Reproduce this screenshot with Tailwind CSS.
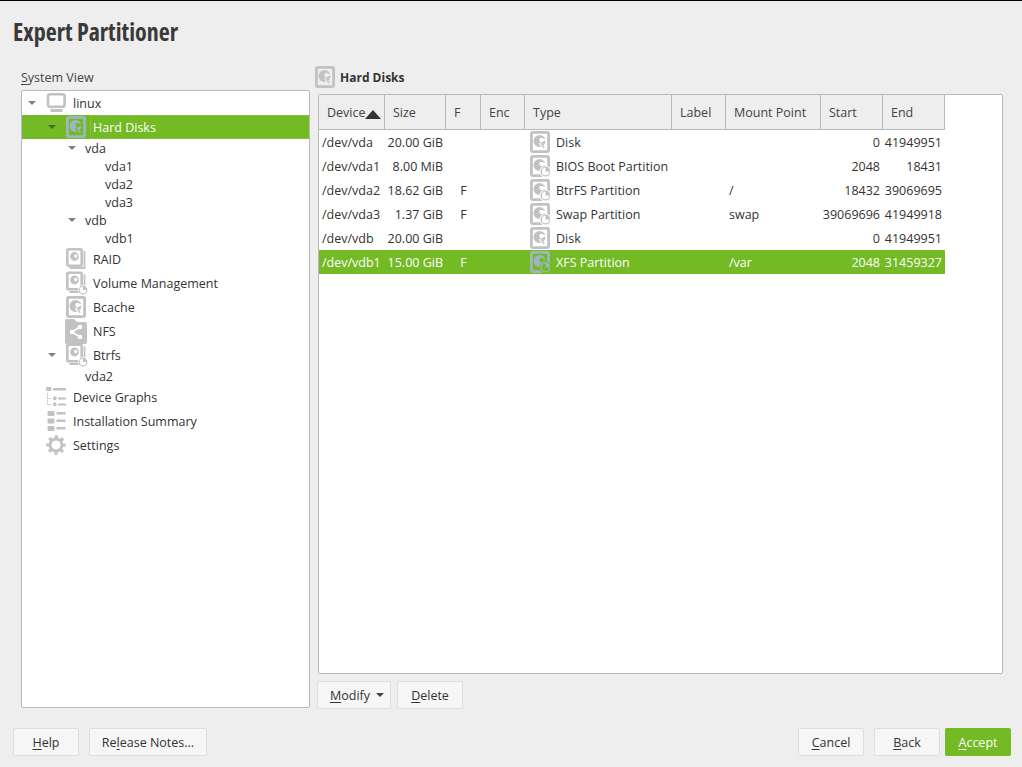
<!DOCTYPE html>
<html lang="en">
<head>
<meta charset="UTF-8">
<title>Expert Partitioner</title>
<script src="https://cdn.jsdelivr.net/npm/@tailwindcss/browser@4"></script>
</head>
<body class="bg-[#eeeeee] text-[#333333] text-[12.5px] leading-[15px] [font-family:'Open_Sans',sans-serif] overflow-hidden">

<!-- icon sprites -->
<svg class="hidden" xmlns="http://www.w3.org/2000/svg">
  <symbol id="i-monitor" viewBox="0 0 20 22">
    <rect x="2" y="2.200" width="16.600" height="12.600" rx="2" fill="none" stroke="currentColor" stroke-width="2.600"/>
    <rect x="4.500" y="17" width="12" height="3" fill="currentColor"/>
  </symbol>
  <symbol id="i-disk" viewBox="0 0 20 22">
    <rect x="1.400" y="1.400" width="17.200" height="19.200" rx="1.500" fill="none" stroke="currentColor" stroke-width="2.800"/>
    <circle cx="9.500" cy="10" r="6" fill="currentColor"/>
    <circle cx="11.600" cy="9" r="2.300" fill="var(--ibg,#fff)"/>
    <path d="M12 9l5 0" stroke="var(--ibg,#fff)" stroke-width="1.800"/>
    <path d="M10 12l4.500 6" stroke="var(--ibg,#fff)" stroke-width="2.800"/>
    <path d="M11 12.500l3.200 4.400" stroke="currentColor" stroke-width="1.300"/>
  </symbol>
  <symbol id="i-part" viewBox="0 0 20 22">
    <rect x="1.400" y="1.400" width="17.200" height="19.200" rx="1.500" fill="none" stroke="currentColor" stroke-width="2.800"/>
    <circle cx="9.500" cy="10" r="6" fill="currentColor"/>
    <circle cx="11.600" cy="9" r="2.300" fill="var(--ibg,#fff)"/>
    <path d="M12 9l5 0" stroke="var(--ibg,#fff)" stroke-width="1.800"/>
    <circle cx="15.500" cy="16.500" r="6" fill="var(--ibg,#fff)"/>
    <circle cx="15.500" cy="16.500" r="4.400" fill="none" stroke="currentColor" stroke-width="1.300"/>
    <path d="M15.500 16.500v-4a4 4 0 0 1 4 4z" fill="currentColor"/>
  </symbol>
  <symbol id="i-raid" viewBox="0 0 20 22">
    <rect x="1.300" y="1.300" width="14.400" height="16.400" rx="1.500" fill="none" stroke="currentColor" stroke-width="2.600"/>
    <circle cx="8.500" cy="8.500" r="4.400" fill="currentColor"/>
    <circle cx="9.800" cy="8" r="1.700" fill="#fff"/>
    <path d="M18.500 3v17h-15" fill="none" stroke="currentColor" stroke-width="1.800"/>
  </symbol>
  <symbol id="i-lvm" viewBox="0 0 22 24">
    <rect x="1.300" y="1.800" width="14.400" height="16.400" rx="1.500" fill="none" stroke="currentColor" stroke-width="2.600"/>
    <circle cx="8.500" cy="9" r="4.400" fill="currentColor"/>
    <circle cx="9.800" cy="8.500" r="1.700" fill="#fff"/>
    <path d="M18.500 3.500v13M3.500 21h10" fill="none" stroke="currentColor" stroke-width="1.800"/>
    <circle cx="17" cy="19" r="5" fill="#fff"/>
    <circle cx="17" cy="19" r="3.800" fill="none" stroke="currentColor" stroke-width="1.200"/>
    <path d="M17 19v-3.400a3.400 3.400 0 0 1 3.400 3.400z" fill="currentColor"/>
  </symbol>
  <symbol id="i-nfs" viewBox="0 0 22 25">
    <path d="M0 2a2 2 0 0 1 2-2h7l3 3h8a2 2 0 0 1 2 2v18a2 2 0 0 1-2 2H2a2 2 0 0 1-2-2z" fill="currentColor"/>
    <path d="M15 8l-8 5 8 5" fill="none" stroke="#fff" stroke-width="1.500"/>
    <circle cx="15" cy="8" r="2.300" fill="#fff"/>
    <circle cx="7" cy="13" r="2.300" fill="#fff"/>
    <circle cx="15" cy="18" r="2.300" fill="#fff"/>
  </symbol>
  <symbol id="i-graph" viewBox="0 0 20 22">
    <rect x="0" y="1" width="5.500" height="4" rx="1" fill="currentColor"/>
    <rect x="7" y="2" width="13" height="2.500" fill="currentColor"/>
    <path d="M1.500 7v12M1.500 12.500h4M1.500 18.500h4" fill="none" stroke="currentColor" stroke-width="1" stroke-dasharray="1.500 .7"/>
    <rect x="7" y="10.500" width="3.500" height="3.500" rx="1" fill="currentColor"/>
    <rect x="12" y="11.500" width="8" height="2" fill="currentColor"/>
    <rect x="7" y="16.500" width="3.500" height="3.500" rx="1" fill="currentColor"/>
    <rect x="12" y="17.500" width="8" height="2" fill="currentColor"/>
  </symbol>
  <symbol id="i-list" viewBox="0 0 20 22">
    <rect x="1.500" y="1" width="7" height="5" rx="1" fill="currentColor"/>
    <rect x="10.500" y="2" width="9" height="2.500" fill="currentColor"/>
    <rect x="1.500" y="8.500" width="7" height="5" rx="1" fill="currentColor"/>
    <rect x="10.500" y="9.500" width="9" height="2.500" fill="currentColor"/>
    <rect x="1.500" y="16" width="7" height="5" rx="1" fill="currentColor"/>
    <rect x="10.500" y="17" width="9" height="2.500" fill="currentColor"/>
  </symbol>
  <symbol id="i-gear" viewBox="0 0 20 20">
    <circle cx="10" cy="10" r="6" fill="none" stroke="currentColor" stroke-width="2.800"/>
    <circle cx="10" cy="10" r="8.200" fill="none" stroke="currentColor" stroke-width="3" stroke-dasharray="3.200 3.240" stroke-dashoffset="1.600"/>
  </symbol>
</svg>

<div class="h-[767px] flex flex-col border-t border-black">

  <!-- title -->
  <header class="h-[65px] pl-[13px] pt-[18px]">
    <h1 class="text-[24px] leading-[26px] font-bold text-[#3a3a3a] [font-stretch:75%]">Expert Partitioner</h1>
  </header>

  <div class="flex-1 min-h-0 flex pl-[21px] pr-[19px]">

    <!-- system view tree -->
    <div class="w-[289px] flex flex-col">
      <div class="h-6 flex items-center pb-[2px] text-[#444]"><span><u class="underline-offset-2">S</u>ystem View</span></div>
      <div class="flex-1 mb-px bg-white border border-[#b9b9b9] rounded-[2px] overflow-hidden">

        <div class="h-6 flex items-center">
          <span class="w-[23px] pl-[6px]"><span class="block w-0 h-0 border-x-4 border-x-transparent border-t-4 border-t-[#808080]"></span></span>
          <svg class="w-5 h-[22px] ml-px shrink-0 text-[#c2c2c2]"><use href="#i-monitor"/></svg>
          <span class="ml-[7px]">linux</span>
        </div>

        <div class="h-6 flex items-center pl-5 bg-[#73ba25] text-white font-medium [--ibg:#73ba25]">
          <span class="w-[23px] pl-[6px]"><span class="block w-0 h-0 border-x-4 border-x-transparent border-t-4 border-t-[#4a6b26]"></span></span>
          <svg class="w-5 h-[22px] ml-px shrink-0 text-[#9db7c1]"><use href="#i-disk"/></svg>
          <span class="ml-[4px] self-stretch flex-1 flex items-center pl-[2px] border border-r-0 border-[#83c13c]">Hard Disks</span>
        </div>

        <div class="h-[18px] flex items-center pl-10">
          <span class="w-[23px] pl-[6px]"><span class="block w-0 h-0 border-x-4 border-x-transparent border-t-4 border-t-[#808080]"></span></span>
          <span>vda</span>
        </div>
        <div class="h-[18px] flex items-center pl-[83px]">vda1</div>
        <div class="h-[18px] flex items-center pl-[83px]">vda2</div>
        <div class="h-[18px] flex items-center pl-[83px]">vda3</div>
        <div class="h-[18px] flex items-center pl-10">
          <span class="w-[23px] pl-[6px]"><span class="block w-0 h-0 border-x-4 border-x-transparent border-t-4 border-t-[#808080]"></span></span>
          <span>vdb</span>
        </div>
        <div class="h-[18px] flex items-center pl-[83px]">vdb1</div>

        <div class="h-6 flex items-center pl-[44px]">
          <svg class="w-5 h-[22px] shrink-0 text-[#c2c2c2]"><use href="#i-raid"/></svg>
          <span class="ml-[7px]">RAID</span>
        </div>
        <div class="h-6 flex items-center pl-[44px]">
          <svg class="w-[22px] h-6 -mr-[2px] shrink-0 text-[#c2c2c2]"><use href="#i-lvm"/></svg>
          <span class="ml-[7px]">Volume Management</span>
        </div>
        <div class="h-6 flex items-center pl-[44px]">
          <svg class="w-5 h-[22px] shrink-0 text-[#c2c2c2]"><use href="#i-disk"/></svg>
          <span class="ml-[7px]">Bcache</span>
        </div>
        <div class="h-6 flex items-center pl-[43px]">
          <svg class="w-[22px] h-[25px] shrink-0 text-[#c2c2c2]"><use href="#i-nfs"/></svg>
          <span class="ml-[6px]">NFS</span>
        </div>
        <div class="h-6 flex items-center pl-5">
          <span class="w-[23px] pl-[6px]"><span class="block w-0 h-0 border-x-4 border-x-transparent border-t-4 border-t-[#808080]"></span></span>
          <svg class="w-[22px] h-6 ml-px -mr-[2px] shrink-0 text-[#c2c2c2]"><use href="#i-lvm"/></svg>
          <span class="ml-[7px]">Btrfs</span>
        </div>
        <div class="h-[18px] flex items-center pl-[63px]">vda2</div>

        <div class="h-6 flex items-center pl-[24px]">
          <svg class="w-5 h-[22px] shrink-0 text-[#c2c2c2]"><use href="#i-graph"/></svg>
          <span class="ml-[7px]">Device Graphs</span>
        </div>
        <div class="h-6 flex items-center pl-[24px]">
          <svg class="w-5 h-[22px] shrink-0 text-[#c2c2c2]"><use href="#i-list"/></svg>
          <span class="ml-[7px]">Installation Summary</span>
        </div>
        <div class="h-6 flex items-center pl-[24px]">
          <svg class="w-5 h-5 shrink-0 text-[#c2c2c2]"><use href="#i-gear"/></svg>
          <span class="ml-[7px]">Settings</span>
        </div>
      </div>
    </div>

    <!-- hard disks panel -->
    <div class="ml-[8px] flex-1 flex flex-col">
      <div class="h-7 flex items-center pb-[6px] -ml-[3px]">
        <svg class="w-5 h-[22px] shrink-0 text-[#c2c2c2] [--ibg:#eeeeee]"><use href="#i-disk"/></svg>
        <span class="ml-[5px] text-[12px] font-bold text-[#333]">Hard Disks</span>
      </div>
      <div class="flex-1 min-h-0 bg-white border border-[#b9b9b9] rounded-[2px] overflow-hidden">
        <table class="table-fixed w-[626px] border-separate border-spacing-0 whitespace-nowrap">
          <colgroup>
            <col class="w-[66px]"><col class="w-[61px]"><col class="w-[35px]"><col class="w-[44px]"><col class="w-[147px]"><col class="w-[54px]"><col class="w-[95px]"><col class="w-[62px]"><col class="w-[62px]">
          </colgroup>
          <thead>
            <tr class="h-[35px] bg-[#eeeeee] text-[#444] text-left">
              <th class="font-normal pl-2 border-r border-b border-[#b9b9b9] relative">Device<svg class="absolute left-[46px] top-[15px] w-4 h-[9px]" viewBox="0 0 16 9"><path d="M8 0l8 9H0z" fill="#333"/></svg></th>
              <th class="font-normal pl-2 border-r border-b border-[#b9b9b9]">Size</th>
              <th class="font-normal pl-2 border-r border-b border-[#b9b9b9]">F</th>
              <th class="font-normal pl-2 border-r border-b border-[#b9b9b9]">Enc</th>
              <th class="font-normal pl-2 border-r border-b border-[#b9b9b9]">Type</th>
              <th class="font-normal pl-2 border-r border-b border-[#b9b9b9]">Label</th>
              <th class="font-normal pl-2 border-r border-b border-[#b9b9b9]">Mount Point</th>
              <th class="font-normal pl-2 border-r border-b border-[#b9b9b9]">Start</th>
              <th class="font-normal pl-2 border-r border-b border-[#b9b9b9]">End</th>
            </tr>
          </thead>
          <tbody>
            <tr class="h-6">
              <td class="pl-[3px]">/dev/vda</td><td class="text-right pr-[3px]">20.00 GiB</td><td class="text-center"></td><td></td>
              <td class="pl-[5px]"><span class="flex items-center"><svg class="w-5 h-[22px] shrink-0 text-[#c2c2c2]"><use href="#i-disk"/></svg><span class="ml-[6px]">Disk</span></span></td>
              <td></td><td class="pl-[3px]"></td><td class="text-right pr-[3px]">0</td><td class="text-right pr-[3px]">41949951</td>
            </tr>
            <tr class="h-6">
              <td class="pl-[3px]">/dev/vda1</td><td class="text-right pr-[3px]">8.00 MiB</td><td class="text-center"></td><td></td>
              <td class="pl-[5px]"><span class="flex items-center"><svg class="w-5 h-[22px] shrink-0 text-[#c2c2c2]"><use href="#i-part"/></svg><span class="ml-[6px]">BIOS Boot Partition</span></span></td>
              <td></td><td class="pl-[3px]"></td><td class="text-right pr-[3px]">2048</td><td class="text-right pr-[3px]">18431</td>
            </tr>
            <tr class="h-6">
              <td class="pl-[3px]">/dev/vda2</td><td class="text-right pr-[3px]">18.62 GiB</td><td class="text-center">F</td><td></td>
              <td class="pl-[5px]"><span class="flex items-center"><svg class="w-5 h-[22px] shrink-0 text-[#c2c2c2]"><use href="#i-part"/></svg><span class="ml-[6px]">BtrFS Partition</span></span></td>
              <td></td><td class="pl-[3px]">/</td><td class="text-right pr-[3px]">18432</td><td class="text-right pr-[3px]">39069695</td>
            </tr>
            <tr class="h-6">
              <td class="pl-[3px]">/dev/vda3</td><td class="text-right pr-[3px]">1.37 GiB</td><td class="text-center">F</td><td></td>
              <td class="pl-[5px]"><span class="flex items-center"><svg class="w-5 h-[22px] shrink-0 text-[#c2c2c2]"><use href="#i-part"/></svg><span class="ml-[6px]">Swap Partition</span></span></td>
              <td></td><td class="pl-[3px]">swap</td><td class="text-right pr-[3px]">39069696</td><td class="text-right pr-[3px]">41949918</td>
            </tr>
            <tr class="h-6">
              <td class="pl-[3px]">/dev/vdb</td><td class="text-right pr-[3px]">20.00 GiB</td><td class="text-center"></td><td></td>
              <td class="pl-[5px]"><span class="flex items-center"><svg class="w-5 h-[22px] shrink-0 text-[#c2c2c2]"><use href="#i-disk"/></svg><span class="ml-[6px]">Disk</span></span></td>
              <td></td><td class="pl-[3px]"></td><td class="text-right pr-[3px]">0</td><td class="text-right pr-[3px]">41949951</td>
            </tr>
            <tr class="h-6 bg-[#73ba25] text-white font-medium [--ibg:#73ba25]">
              <td class="pl-[3px]">/dev/vdb1</td><td class="text-right pr-[3px]">15.00 GiB</td><td class="text-center">F</td><td></td>
              <td class="pl-[5px]"><span class="flex items-center"><svg class="w-5 h-[22px] shrink-0 text-[#9db7c1]"><use href="#i-part"/></svg><span class="ml-[6px]">XFS Partition</span></span></td>
              <td></td><td class="pl-[3px]">/var</td><td class="text-right pr-[3px]">2048</td><td class="text-right pr-[3px]">31459327</td>
            </tr>
          </tbody>
        </table>
      </div>
      <div class="mt-[7px] -ml-px flex gap-[6px]">
        <button class="h-7 w-[74px] pl-[12px] flex items-center gap-[6px] bg-[#f6f6f6] border border-[#dedede] rounded-[2px]"><span><u class="underline-offset-2">M</u>odify</span><span class="block w-0 h-0 border-x-4 border-x-transparent border-t-4 border-t-[#444]"></span></button>
        <button class="h-7 w-[66px] bg-[#f6f6f6] border border-[#dedede] rounded-[2px]"><u class="underline-offset-2">D</u>elete</button>
      </div>
    </div>
  </div>

  <!-- bottom buttons -->
  <footer class="mt-[19px] mb-[11px] pl-[13px] pr-[11px] flex">
    <button class="h-7 w-[66px] bg-[#f6f6f6] border border-[#dedede] rounded-[2px]"><u class="underline-offset-2">H</u>elp</button>
    <button class="h-7 w-[118px] ml-[10px] bg-[#f6f6f6] border border-[#dedede] rounded-[2px]">Re<u class="underline-offset-2">l</u>ease Notes...</button>
    <button class="h-7 w-[66px] ml-auto bg-[#f6f6f6] border border-[#dedede] rounded-[2px]"><u class="underline-offset-2">C</u>ancel</button>
    <button class="h-7 w-[66px] ml-[10px] bg-[#f6f6f6] border border-[#dedede] rounded-[2px]"><u class="underline-offset-2">B</u>ack</button>
    <button class="h-7 w-[66px] ml-[5px] bg-[#73ba25] text-white rounded-[2px] font-medium"><u class="underline-offset-2">A</u>ccept</button>
  </footer>
</div>
</body>
</html>
